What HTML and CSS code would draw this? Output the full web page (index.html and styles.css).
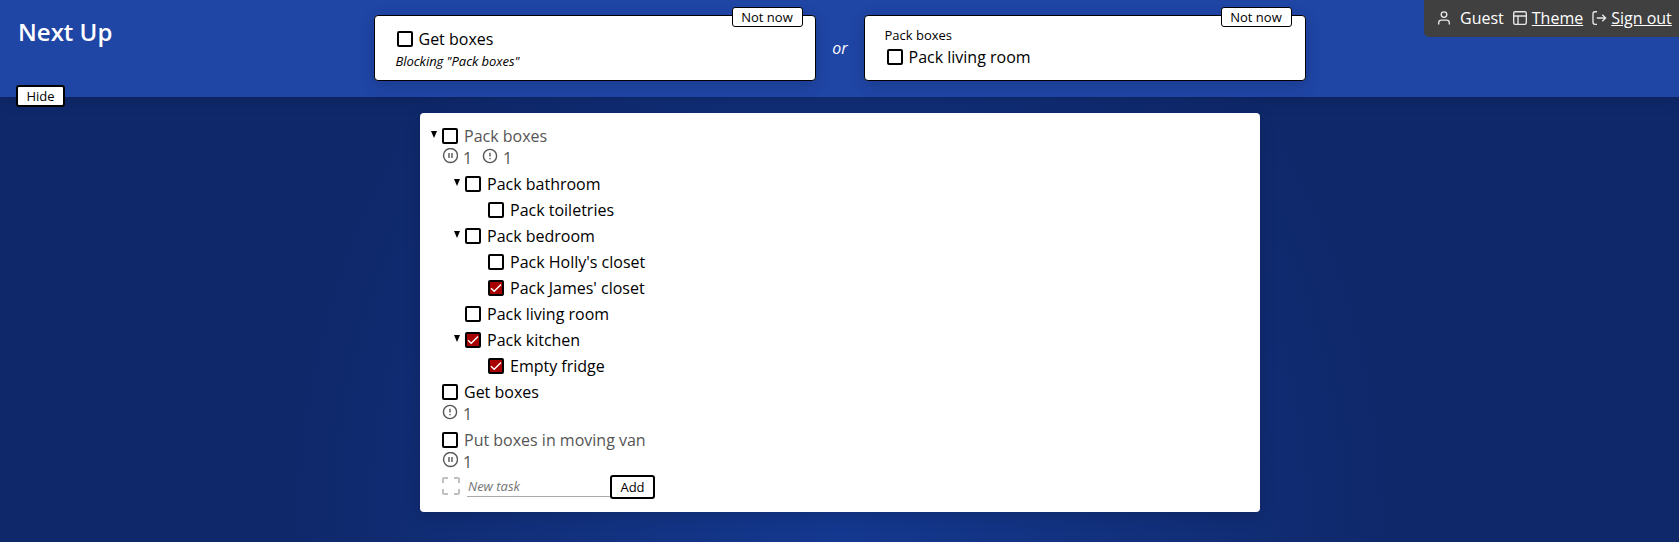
FILE: index.html
```
<!DOCTYPE html>
<html lang="en">
<head>
<meta charset="utf-8">
<title>Next Up</title>
<link rel="stylesheet" href="styles.css">
</head>
<body>
<svg class="defs" aria-hidden="true">
  <symbol id="pause" viewBox="0 0 16 16"><circle cx="8.500" cy="7.500" r="7"/><path d="M7 5v5M10 5v5"/></symbol>
  <symbol id="alert" viewBox="0 0 16 16"><circle cx="8" cy="8" r="6.600"/><path d="M8 4.800v3.600M8 9.900v1.400"/></symbol>
</svg>
<header class="header">
  <h1 class="title">Next Up</h1>
  <div class="suggestions">
    <section class="card card-first">
      <button class="button not-now">Not now</button>
      <div class="card-task"><span class="box"></span><span>Get boxes</span></div>
      <div class="small blocking">Blocking "Pack boxes"</div>
    </section>
    <span class="or">or</span>
    <section class="card card-second">
      <button class="button not-now">Not now</button>
      <div class="small parent">Pack boxes</div>
      <div class="card-task"><span class="box"></span><span>Pack living room</span></div>
    </section>
  </div>
  <button class="button hide">Hide</button>
  <nav class="account">
    <svg class="nav-icon user" viewBox="0 0 16 16"><circle cx="8" cy="4.600" r="2.800"/><path d="M2.700 14.600v-1.800q0-2.700 2.700-2.700h5.200q2.700 0 2.700 2.700v1.800"/></svg>
    <span class="guest">Guest</span>
    <svg class="nav-icon theme" viewBox="0 0 16 16"><rect x="1.700" y="1.700" width="12.600" height="12.600" rx="1.500"/><path d="M1.700 6h12.600M6 6v8.300"/></svg>
    <a class="link theme-link">Theme</a>
    <svg class="nav-icon out" viewBox="0 0 16 16"><path d="M6 1.700H4q-2 0-2 2v8.600q0 2 2 2h2M5.800 8h8.700M11.300 4.700 14.600 8l-3.300 3.300"/></svg>
    <a class="link">Sign out</a>
  </nav>
</header>
<main class="list">
  <div class="task muted"><span class="arrow"></span><span class="box"></span><span>Pack boxes</span></div>
  <div class="counts"><svg class="count-icon"><use href="#pause"/></svg><span class="count">1</span><svg class="count-icon"><use href="#alert"/></svg><span class="count">1</span></div>
  <div class="children">
    <div class="task"><span class="arrow"></span><span class="box"></span><span>Pack bathroom</span></div>
    <div class="children">
      <div class="task"><span class="box"></span><span>Pack toiletries</span></div>
    </div>
    <div class="task"><span class="arrow"></span><span class="box"></span><span>Pack bedroom</span></div>
    <div class="children">
      <div class="task"><span class="box"></span><span>Pack Holly's closet</span></div>
      <div class="task"><span class="box checked"><svg class="check" viewBox="0 0 12 12"><path d="M1 6.300 4.200 9.300 11 2.400"/></svg></span><span>Pack James' closet</span></div>
    </div>
    <div class="task"><span class="box"></span><span>Pack living room</span></div>
    <div class="task"><span class="arrow"></span><span class="box checked"><svg class="check" viewBox="0 0 12 12"><path d="M1 6.300 4.200 9.300 11 2.400"/></svg></span><span>Pack kitchen</span></div>
    <div class="children">
      <div class="task"><span class="box checked"><svg class="check" viewBox="0 0 12 12"><path d="M1 6.300 4.200 9.300 11 2.400"/></svg></span><span>Empty fridge</span></div>
    </div>
  </div>
  <div class="task"><span class="box"></span><span>Get boxes</span></div>
  <div class="counts"><svg class="count-icon"><use href="#alert"/></svg><span class="count">1</span></div>
  <div class="task muted"><span class="box"></span><span>Put boxes in moving van</span></div>
  <div class="counts"><svg class="count-icon"><use href="#pause"/></svg><span class="count">1</span></div>
  <div class="new-task">
    <svg class="ghost" viewBox="0 0 18 18"><path d="M1 6V2q0-1 1-1h4M12 1h4q1 0 1 1v4M17 12v4q0 1-1 1h-4M6 17H2q-1 0-1-1v-4"/></svg>
    <input class="field" type="text" placeholder="New task">
    <button class="button add">Add</button>
  </div>
</main>
</body>
</html>
```
FILE: styles.css
```
* { box-sizing: border-box; }
body {
  margin: 0;
  height: 542px;
  overflow: hidden;
  font: 16px/22px "Open Sans", "Noto Sans", sans-serif;
  color: #000;
  background: #0f286a radial-gradient(ellipse 560px 700px at 840px 542px, #14388f 0, #0f286a 100%);
}
.defs { position: absolute; width: 0; height: 0; }
.header {
  position: relative;
  display: flex;
  justify-content: center;
  height: 97px;
  padding-top: 15px;
  background: #1f45a5;
  box-shadow: 0 2px 16px rgba(0, 0, 0, .15);
}
.title {
  position: absolute;
  left: 18px;
  top: 15px;
  margin: 0;
  font-size: 24px;
  font-weight: 600;
  line-height: 33px;
  color: #fff;
}
.suggestions { display: flex; }
.card {
  position: relative;
  width: 442px;
  height: 66px;
  padding: 10px 20px;
  background: #fff;
  border: 1px solid #000;
  border-radius: 4px;
  box-shadow: 0 4px 16px rgba(0, 0, 0, .15);
}
.card-first { padding-top: 12px; }
.card-task { display: flex; align-items: center; gap: 6px; padding-left: 2px; }
.small { font-size: 13px; line-height: 18px; }
.parent { height: 20px; }
.blocking { font-style: italic; padding: 2px 0 0 1px; letter-spacing: -.05px; }
.or { width: 48px; padding: 22px 0 0 1px; text-align: center; font-style: italic; color: #fff; }
.button {
  padding: 0;
  font: 13px/18px "Open Sans", "Noto Sans", sans-serif;
  color: #000;
  background: #fff;
  border: 2px solid #000;
  border-radius: 3px;
}
.not-now { position: absolute; right: 12px; top: -9px; width: 71px; height: 20px; border-width: 1px; }
.card-second .not-now { right: 13px; }
.hide { position: absolute; left: 16px; top: 85px; width: 49px; height: 22px; }
.account {
  position: absolute;
  right: 0;
  top: 0;
  display: flex;
  align-items: center;
  width: 255px;
  height: 37px;
  padding: 0 0 2px 12px;
  color: #fff;
  background: #404040;
  border-bottom-left-radius: 5px;
}
.nav-icon { width: 16px; height: 16px; fill: none; stroke: #e8e8e8; stroke-width: 1.35; flex: none; }
.guest { margin: 0 8px; }
.theme { margin-right: 4px; }
.theme-link { margin-right: 8px; }
.out { margin-right: 4px; }
.link { text-decoration: underline; white-space: nowrap; }
.list {
  width: 840px;
  height: 399px;
  margin: 16px 0 0 420px;
  padding: 10px 22px;
  background: #fff;
  border-radius: 4px;
  box-shadow: 0 4px 16px rgba(0, 0, 0, .15);
}
.task { position: relative; display: flex; align-items: center; gap: 6px; height: 26px; }
.muted { color: #555; }
.box { width: 16px; height: 16px; flex: none; border: 2px solid #000; border-radius: 2px; background: #fff; }
.checked { background: #a80000; }
.check { display: block; width: 12px; height: 12px; fill: none; stroke: #fff; stroke-width: 1.4; }
.arrow {
  position: absolute;
  left: -12px;
  top: 8px;
  border: solid transparent;
  border-width: 7px 3.5px 0;
  border-top-color: #000;
  margin-left: .5px;
}
.children { padding-left: 23px; }
.counts { display: flex; height: 22px; color: #555; }
.count-icon { width: 16px; height: 16px; margin-top: -1px; fill: none; stroke: #555; stroke-width: 1.4; overflow: visible; }
.count { width: 24px; padding-left: 5px; line-height: 18px; }
.new-task { display: flex; align-items: center; height: 26px; margin-top: -1px; }
.ghost { width: 18px; height: 18px; margin: 0 7px 2px 0; fill: none; stroke: #c0c0c0; stroke-width: 2; }
.field {
  width: 143px;
  height: 21px;
  padding: 0 1px;
  margin-bottom: 1px;
  border: 0;
  border-bottom: 1px solid #aaa;
  background: none;
  font: italic 13px "Open Sans", "Noto Sans", sans-serif;
}
.field::placeholder { color: #757575; }
.add { width: 45px; height: 24px; }
```
